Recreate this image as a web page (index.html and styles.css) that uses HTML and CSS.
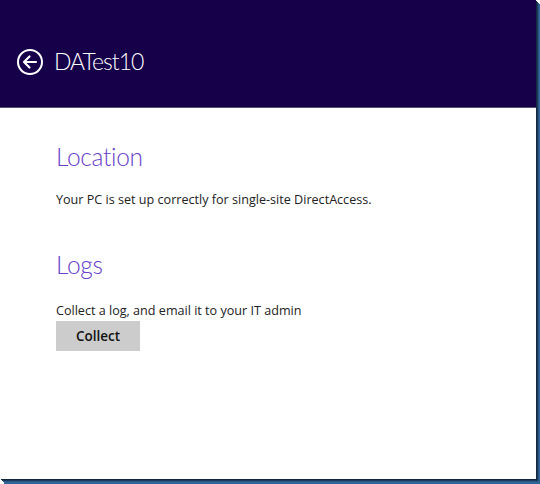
FILE: index.html
```html
<!DOCTYPE html>
<html>
<head>
<meta charset="utf-8">
<link rel="stylesheet" href="styles.css">
</head>
<body>
<div class="window">
  <header class="topbar">
    <svg class="back" width="28" height="28" viewBox="0 0 28 28">
      <circle cx="14" cy="14" r="12" fill="none" stroke="#fff" stroke-width="2"/>
      <path d="M8 14 H20 M13.5 8.5 L8 14 L13.5 19.5" fill="none" stroke="#fff" stroke-width="2.2" stroke-linecap="round" stroke-linejoin="round"/>
    </svg>
    <h1 class="title">DATest10</h1>
  </header>
  <main class="content">
    <section class="section">
      <h2 class="heading">Location</h2>
      <p class="text">Your PC is set up correctly for single-site DirectAccess.</p>
    </section>
    <section class="section logs">
      <h2 class="heading">Logs</h2>
      <p class="text">Collect a log, and email it to your IT admin</p>
      <button class="btn">Collect</button>
    </section>
  </main>
</div>
</body>
</html>
```
FILE: styles.css
```css
html, body {
  margin: 0;
  padding: 0;
  background: #ffffff;
}
body {
  width: 540px;
  height: 484px;
  overflow: hidden;
  font-family: "Open Sans", "Noto Sans", sans-serif;
}
.window {
  width: 536px;
  height: 479px;
  background: #ffffff;
  box-shadow: 1px 1px 0 #13263b, 2px 2px 0 #1b3a5c, 3px 3px 0 #285887, 4px 4px 0 #2e6698, 4px 5px 0 #2e6698;
  overflow: hidden;
}
.topbar {
  height: 108px;
  background: #16004a;
  border-bottom: 1px solid #5a5470;
  box-sizing: border-box;
  display: flex;
  align-items: center;
  padding-left: 16px;
  padding-top: 16px;
}
.back {
  display: block;
  margin-right: 10px;
}
.title {
  margin: 0;
  color: #ffffff;
  font-family: "Lato", "Open Sans", sans-serif;
  font-weight: 300;
  font-size: 23px;
  letter-spacing: -1px;
  line-height: 1;
}
.content {
  padding: 0 0 0 56px;
}
.section {
  display: flex;
  flex-direction: column;
  align-items: flex-start;
}
.heading {
  margin: 0;
  color: #6840c8;
  font-family: "Lato", "Open Sans", sans-serif;
  font-weight: 300;
  font-size: 24.5px;
  letter-spacing: -0.3px;
  line-height: 32px;
  margin-top: 33px;
}
.text {
  margin: 0;
  color: #222222;
  font-size: 12.6px;
  line-height: 18px;
  margin-top: 18px;
}
.logs .heading {
  margin-top: 40px;
}
.logs .text {
  margin-top: 21px;
}
.btn {
  margin-top: 1px;
  width: 84px;
  height: 30px;
  border: none;
  background: #cccccc;
  color: #111111;
  font-family: "Open Sans", "Noto Sans", sans-serif;
  font-weight: 600;
  font-size: 13.5px;
  padding: 0;
}
```
